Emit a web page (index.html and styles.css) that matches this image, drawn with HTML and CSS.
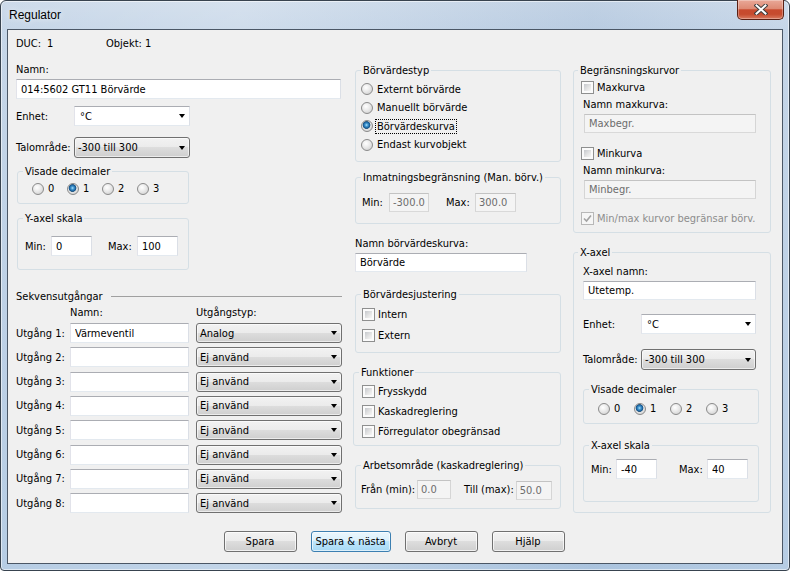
FILE: index.html
```html
<!DOCTYPE html>
<html lang="sv">
<head>
<meta charset="utf-8">
<title>Regulator</title>
<link rel="stylesheet" href="styles.css">
</head>
<body>
<div class="window">
  <div class="titlebar">
    <span class="title">Regulator</span>
    <div class="close">
      <svg width="14" height="11" viewBox="0 0 14 11"><path d="M2.5 1.5 L11.5 9.5 M11.5 1.5 L2.5 9.5" stroke="#3d3d3d" stroke-width="4" stroke-linecap="square"/><path d="M2.5 1.5 L11.5 9.5 M11.5 1.5 L2.5 9.5" stroke="#fff" stroke-width="2" stroke-linecap="square"/></svg>
    </div>
  </div>
  <div class="client">
    <div class="columns">
      <!-- LEFT -->
      <div class="col">
        <div class="info"><span class="info-duc"><span class="info-k">DUC:</span>1</span><span>Objekt: 1</span></div>
        <div class="namn-lbl">Namn:</div>
        <input class="tb namn-tb" value="014:5602 GT11 Börvärde">
        <div class="row enhet-row"><span class="row-lbl">Enhet:</span><div class="combo edit w116"><span class="val">°C</span><span class="arrow"></span></div></div>
        <div class="row talomr-row"><span class="row-lbl">Talområde:</span><div class="combo w116 h21"><span class="val">-300 till 300</span><span class="arrow"></span></div></div>
        <fieldset class="group dec-left">
          <legend>Visade decimaler</legend>
          <div class="radios dec-left-body">
            <span class="ropt"><span class="radio"></span>0</span>
            <span class="ropt"><span class="radio on"></span>1</span>
            <span class="ropt"><span class="radio"></span>2</span>
            <span class="ropt"><span class="radio"></span>3</span>
          </div>
        </fieldset>
        <fieldset class="group yaxel">
          <legend>Y-axel skala</legend>
          <div class="row yaxel-body">
            <span class="lbl-min">Min:</span><input class="tb w41" value="0">
            <span class="lbl-max">Max:</span><input class="tb w41" value="100">
          </div>
        </fieldset>
        <div class="sekv-head"><span>Sekvensutgångar</span><span class="sep"></span></div>
        <div class="out-head"><span class="out-head-namn">Namn:</span><span>Utgångstyp:</span></div>
        <div class="outs">
          <div class="out-row"><span class="out-lbl">Utgång 1:</span><input class="tb out-tb" value="Värmeventil"><div class="combo out-combo"><span class="val">Analog</span><span class="arrow"></span></div></div>
          <div class="out-row"><span class="out-lbl">Utgång 2:</span><input class="tb out-tb" value=""><div class="combo out-combo"><span class="val">Ej använd</span><span class="arrow"></span></div></div>
          <div class="out-row"><span class="out-lbl">Utgång 3:</span><input class="tb out-tb" value=""><div class="combo out-combo"><span class="val">Ej använd</span><span class="arrow"></span></div></div>
          <div class="out-row"><span class="out-lbl">Utgång 4:</span><input class="tb out-tb" value=""><div class="combo out-combo"><span class="val">Ej använd</span><span class="arrow"></span></div></div>
          <div class="out-row"><span class="out-lbl">Utgång 5:</span><input class="tb out-tb" value=""><div class="combo out-combo"><span class="val">Ej använd</span><span class="arrow"></span></div></div>
          <div class="out-row"><span class="out-lbl">Utgång 6:</span><input class="tb out-tb" value=""><div class="combo out-combo"><span class="val">Ej använd</span><span class="arrow"></span></div></div>
          <div class="out-row"><span class="out-lbl">Utgång 7:</span><input class="tb out-tb" value=""><div class="combo out-combo"><span class="val">Ej använd</span><span class="arrow"></span></div></div>
          <div class="out-row"><span class="out-lbl">Utgång 8:</span><input class="tb out-tb" value=""><div class="combo out-combo"><span class="val">Ej använd</span><span class="arrow"></span></div></div>
        </div>
      </div>

      <!-- MIDDLE -->
      <div class="col">
        <fieldset class="group bvtyp">
          <legend>Börvärdestyp</legend>
          <div class="bvtyp-body">
            <div class="rrow"><span class="radio"></span>Externt börvärde</div>
            <div class="rrow"><span class="radio"></span>Manuellt börvärde</div>
            <div class="rrow"><span class="radio on"></span><span class="focus">Börvärdeskurva</span></div>
            <div class="rrow"><span class="radio"></span>Endast kurvobjekt</div>
          </div>
        </fieldset>
        <fieldset class="group inmat">
          <legend>Inmatningsbegränsning (Man. börv.)</legend>
          <div class="row inmat-body">
            <span class="inmat-min">Min:</span><input class="tb dis narrow inmat-tb1" value="-300.0" disabled>
            <span class="inmat-max">Max:</span><input class="tb dis narrow inmat-tb2" value="300.0" disabled>
          </div>
        </fieldset>
        <div class="nbk-lbl">Namn börvärdeskurva:</div>
        <input class="tb nbk-tb" value="Börvärde">
        <fieldset class="group bvjust">
          <legend>Börvärdesjustering</legend>
          <div class="bvjust-body">
            <div class="crow h21"><span class="check"></span>Intern</div>
            <div class="crow h21"><span class="check"></span>Extern</div>
          </div>
        </fieldset>
        <fieldset class="group funk">
          <legend>Funktioner</legend>
          <div class="funk-body">
            <div class="crow h20"><span class="check"></span>Frysskydd</div>
            <div class="crow h20"><span class="check"></span>Kaskadreglering</div>
            <div class="crow h20"><span class="check"></span>Förregulator obegränsad</div>
          </div>
        </fieldset>
        <fieldset class="group arb">
          <legend>Arbetsområde (kaskadreglering)</legend>
          <div class="row arb-body">
            <span class="arb-fran">Från (min):</span><input class="tb dis narrow arb-tb1" value="0.0" disabled>
            <span class="arb-till">Till (max):</span><input class="tb dis narrow arb-tb2" value="50.0" disabled>
          </div>
        </fieldset>
      </div>

      <!-- RIGHT -->
      <div class="col">
        <fieldset class="group begr">
          <legend>Begränsningskurvor</legend>
          <div class="begr-body">
            <div class="crow h17"><span class="check"></span>Maxkurva</div>
            <div class="begr-lbl">Namn maxkurva:</div>
            <input class="tb dis begr-tb" value="Maxbegr." disabled>
            <div class="crow h17 begr-min"><span class="check"></span>Minkurva</div>
            <div class="begr-lbl">Namn minkurva:</div>
            <input class="tb dis begr-tb" value="Minbegr." disabled>
            <div class="crow h17 begr-mm dis-text"><span class="check dis"><svg width="9" height="9" viewBox="0 0 9 9"><path d="M1 4.5 L3.5 7 L8 1.5" fill="none" stroke="#a3a3a3" stroke-width="1.6"/></svg></span>Min/max kurvor begränsar börv.</div>
          </div>
        </fieldset>
        <fieldset class="group xaxel">
          <legend>X-axel</legend>
          <div class="xaxel-body">
            <div>X-axel namn:</div>
            <input class="tb xnamn-tb" value="Utetemp.">
            <div class="row x-enhet"><span class="row-lbl">Enhet:</span><div class="combo edit w115"><span class="val">°C</span><span class="arrow"></span></div></div>
            <div class="row x-talomr"><span class="row-lbl">Talområde:</span><div class="combo w115 h21"><span class="val">-300 till 300</span><span class="arrow"></span></div></div>
            <fieldset class="group xdec">
              <legend>Visade decimaler</legend>
              <div class="radios xdec-body">
                <span class="ropt ropt36"><span class="radio"></span>0</span>
                <span class="ropt ropt36"><span class="radio on"></span>1</span>
                <span class="ropt ropt36"><span class="radio"></span>2</span>
                <span class="ropt ropt36"><span class="radio"></span>3</span>
              </div>
            </fieldset>
            <fieldset class="group xskala">
              <legend>X-axel skala</legend>
              <div class="row xskala-body">
                <span class="xs-min">Min:</span><input class="tb w41" value="-40">
                <span class="xs-max">Max:</span><input class="tb w41" value="40">
              </div>
            </fieldset>
          </div>
        </fieldset>
      </div>
    </div>

    <div class="buttons">
      <button class="btn">Spara</button>
      <button class="btn default wide">Spara &amp; nästa</button>
      <button class="btn">Avbryt</button>
      <button class="btn">Hjälp</button>
    </div>
  </div>
</div>
</body>
</html>
```

FILE: styles.css
```css
* { box-sizing: border-box; }
html, body { margin: 0; padding: 0; }
body {
  width: 790px; height: 571px; overflow: hidden; background: #ffffff;
  font-family: "DejaVu Sans Condensed", "Liberation Sans", sans-serif;
  font-size: 11px; line-height: 13px; color: #000;
}

/* ---------- window chrome ---------- */
.window {
  width: 790px; height: 571px;
  border: 1px solid #38434f;
  border-radius: 6px 6px 4px 4px;
  background: linear-gradient(90deg, rgba(255,255,255,0.10), rgba(255,255,255,0.25) 30%, rgba(150,175,205,0.15) 75%, rgba(255,255,255,0.1)),
              linear-gradient(#c8d7e8 0px, #bfd1e5 30px, #aec7e1 100%);
  box-shadow: inset 0 0 0 1px rgba(255,255,255,0.55);
  display: flex; flex-direction: column;
}
.titlebar { height: 28px; display: flex; align-items: flex-start; padding-left: 8px; }
.title {
  font-family: "Liberation Sans", sans-serif; font-size: 12px; line-height: 28px;
  color: #000; text-shadow: 0 0 6px rgba(255,255,255,0.9);
}
.close {
  width: 47px; height: 20px; margin: -1px 5px 0 auto;
  border: 1px solid #5a2014; border-top: none; border-radius: 0 0 5px 5px;
  background: linear-gradient(#e9a898 0%, #de8a74 45%, #c84a2e 52%, #c64b2e 75%, #d97a5f 100%);
  box-shadow: inset 0 0 0 1px rgba(255,255,255,0.3);
  display: flex; align-items: center; justify-content: center;
}
.close svg { display: block; }

.client {
  margin: 0 6px; height: 535px;
  background: #f0f0f0;
  border: 1px solid #4b5766;
  padding: 7px 10px 11px 8px;
  display: flex; flex-direction: column;
}
.columns { display: grid; grid-template-columns: 327px 206px 199px; column-gap: 12px; align-items: start; }
.col { display: flex; flex-direction: column; align-items: flex-start; }

/* ---------- controls ---------- */
.tb {
  display: block; flex: none; height: 20px; margin: 0; padding: 0 4px;
  font: inherit; color: #000; background: #fff; outline: none;
  border: 1px solid; border-color: #abadb3 #dbdfe6 #e3e9ef #e2e3ea;
}
.tb.dis { background: #f4f4f4; color: #6d6d6d; border-color: #c3c3c3 #d5d5d5 #d9d9d9 #d5d5d5; -webkit-text-fill-color: #6d6d6d; opacity: 1; }
.tb.narrow { padding: 0 2px 0 3px; }

.combo {
  flex: none; height: 20px; display: flex; align-items: center; padding: 0 4px 0 3px;
  border: 1px solid #707070; border-radius: 3px;
  background: linear-gradient(#f2f2f2 0%, #ebebeb 50%, #dddddd 50%, #cfcfcf 100%);
  box-shadow: inset 0 0 0 1px rgba(255,255,255,0.6);
  white-space: nowrap;
}
.combo.edit { background: #fff; border-radius: 0; border-color: #abadb3 #dbdfe6 #e3e9ef #e2e3ea; box-shadow: none; padding-left: 5px; }
.combo .val { flex: 1; }
.arrow { width: 0; height: 0; border-left: 3.5px solid transparent; border-right: 3.5px solid transparent; border-top: 4px solid #000; }
.h21 { height: 21px; }
.w116 { width: 116px; }
.w115 { width: 115px; }
.w41 { width: 41px; }

.radio {
  flex: none; display: inline-block; width: 12px; height: 12px; border-radius: 50%;
  border: 1px solid #8a8a8a;
  background: radial-gradient(circle at 40% 35%, #ffffff 0, #ececec 40%, #c9c9c9 100%);
}
.radio.on {
  background: radial-gradient(circle at 45% 40%, #b6e4fa 0, #4aa0d8 1.3px, #155a96 3.2px, #2d5b80 3.6px, rgba(0,0,0,0) 4.2px),
              radial-gradient(circle at 40% 35%, #ffffff 0, #ececec 40%, #c9c9c9 100%);
}
.check {
  flex: none; display: inline-flex; align-items: center; justify-content: center;
  width: 13px; height: 13px; padding: 2px;
  border: 1px solid #8e8f8f;
  background: linear-gradient(135deg, #c6c9cd 0%, #e6e6e6 60%, #f7f7f7 100%) content-box, #fbfbfb;
}
.check.dis { border-color: #b8b8b8; background: #f6f6f6; padding: 0; }
.dis-text { color: #8d8d8d; }

.btn {
  width: 73px; height: 21px; margin: 0; padding: 0;
  font: inherit; color: #000;
  border: 1px solid #707070; border-radius: 3px;
  background: linear-gradient(#f2f2f2 0%, #ebebeb 50%, #dddddd 50%, #cfcfcf 100%);
  box-shadow: inset 0 0 0 1px rgba(255,255,255,0.7);
}
.btn.default {
  border-color: #3c7fb1;
  background: linear-gradient(#eaf6fd 0%, #d9f0fc 50%, #bee6fd 50%, #a7d9f5 100%);
  box-shadow: inset 0 0 0 1px rgba(255,255,255,0.6);
}
.btn.wide { width: 80px; }

/* ---------- group boxes ---------- */
.group { margin: 0; padding: 0; border: 1px solid #d5dfe5; border-radius: 3px; min-width: 0; }
.group > legend { padding: 0 2px; margin-left: 5px; line-height: 13px; }

.row { display: flex; align-items: center; white-space: nowrap; }
.row > span { flex: none; }
.row-lbl { width: 58px; flex: none; }
.radios { display: flex; align-items: center; height: 13px; }
.ropt { display: flex; align-items: center; gap: 4px; width: 35px; flex: none; }
.ropt36 { width: 36px; }
.rrow { display: flex; align-items: center; gap: 4px; height: 18.5px; }
.crow { display: flex; align-items: center; gap: 3px; white-space: nowrap; }
.h17 { height: 17px; }
.h20 { height: 20px; }
.focus { outline: 1px dotted #000; outline-offset: 0; padding: 0 1px; margin-left: -1px; }

/* ---------- left column ---------- */
.info { display: flex; height: 13px; }
.info-duc { width: 90px; }
.info-k { display: inline-block; width: 31px; }
.namn-lbl { margin-top: 13px; }
.namn-tb { margin-top: 3px; width: 325px; }
.enhet-row { margin-top: 7px; }
.talomr-row { margin-top: 11px; }
.dec-left { margin: 7px 0 0 1px; width: 172px; }
.dec-left-body { padding: 4px 0 8px 14px; box-sizing: content-box; }
.yaxel { margin: 8px 0 0 1px; width: 172px; }
.yaxel-body { padding: 11px 0 13px 7px; }
.lbl-min { width: 26px; }
.lbl-max { width: 29px; margin-left: 16px; }
.sekv-head { margin-top: 20px; display: flex; align-items: center; width: 326px; }
.sep { flex: 1; height: 1px; background: #a0a0a0; margin-left: 8px; }
.out-head { margin-top: 3px; display: flex; }
.out-head-namn { margin-left: 54px; width: 126px; }
.outs { margin-top: 4px; display: flex; flex-direction: column; gap: 4.33px; }
.out-row { display: flex; align-items: center; height: 20px; white-space: nowrap; }
.out-lbl { width: 54px; flex: none; }
.out-tb { width: 119px; }
.out-combo { width: 146px; margin-left: 7px; }

/* ---------- middle column ---------- */
.bvtyp { margin-top: 27px; width: 206px; }
.bvtyp-body { padding: 3px 0 7px 5px; }
.inmat { margin-top: 9px; width: 206px; }
.inmat-body { padding: 9px 0 11px 6px; }
.inmat-min { width: 27px; }
.inmat-tb1 { width: 40px; height: 19px; }
.inmat-max { width: 29px; margin-left: 17px; }
.inmat-tb2 { width: 41px; height: 19px; }
.nbk-lbl { margin-top: 13px; }
.nbk-tb { margin-top: 3px; width: 172px; height: 19px; }
.bvjust { margin-top: 16px; width: 206px; }
.bvjust-body { padding: 3px 0 6px 6px; }
.funk { margin: 13px 0 0 -2px; width: 208px; }
.funk-body { padding: 2px 0 4px 8px; }
.arb { margin-top: 13px; width: 206px; }
.arb-body { padding: 6px 0 8px 5px; }
.arb-fran { width: 56px; }
.arb-tb1 { width: 34px; height: 19px; }
.arb-till { margin-left: 13px; margin-right: 2px; }
.arb-tb2 { width: 36px; height: 19px; margin-top: 3px; }

/* ---------- right column ---------- */
.begr { margin-top: 27px; width: 198px; }
.begr > legend { margin-left: 4px; }
.begr-body { padding: 2px 0 5px 7px; }
.begr-lbl { margin: 2px 0 0 2px; }
.begr-tb { margin: 3px 0 0 3px; width: 172px; height: 19px; }
.begr-min { margin-top: 12px; }
.begr-mm { margin-top: 11px; }
.xaxel { margin-top: 13px; width: 198px; }
.xaxel > legend { margin-left: 4px; }
.xaxel-body { padding: 6px 0 10px 9px; }
.xnamn-tb { margin-top: 3px; width: 173px; height: 19px; }
.x-enhet { margin-top: 14px; }
.x-talomr { margin-top: 15px; }
.xdec { margin-top: 13px; width: 176px; }
.xdec-body { padding: 6px 0 8px 14px; box-sizing: content-box; }
.xskala { margin-top: 15px; width: 176px; }
.xskala-body { padding: 7px 0 22px 7px; }
.xs-min { width: 25px; }
.xs-max { width: 28px; margin-left: 22px; }

/* ---------- buttons ---------- */
.buttons { margin-top: auto; display: flex; justify-content: center; gap: 14px; }
```
